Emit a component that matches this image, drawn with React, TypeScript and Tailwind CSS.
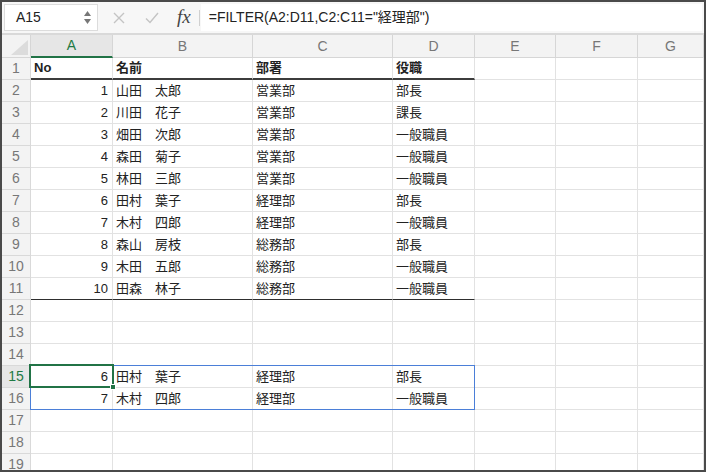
import React from "react";

const FONT = { fontFamily: '"Liberation Sans", "Noto Sans CJK JP", sans-serif' };

const COLS = ["A", "B", "C", "D", "E", "F", "G"];

type Row = [string, string, string, string];

const data: Record<number, Row> = {
  1: ["No", "名前", "部署", "役職"],
  2: ["1", "山田　太郎", "営業部", "部長"],
  3: ["2", "川田　花子", "営業部", "課長"],
  4: ["3", "畑田　次郎", "営業部", "一般職員"],
  5: ["4", "森田　菊子", "営業部", "一般職員"],
  6: ["5", "林田　三郎", "営業部", "一般職員"],
  7: ["6", "田村　葉子", "経理部", "部長"],
  8: ["7", "木村　四郎", "経理部", "一般職員"],
  9: ["8", "森山　房枝", "総務部", "部長"],
  10: ["9", "木田　五郎", "総務部", "一般職員"],
  11: ["10", "田森　林子", "総務部", "一般職員"],
  15: ["6", "田村　葉子", "経理部", "部長"],
  16: ["7", "木村　四郎", "経理部", "一般職員"],
};

const rows = Array.from({ length: 19 }, (_, i) => i + 1);

function Cell({ row, col }: { row: number; col: number }) {
  const r = data[row];
  const text = r && col < 4 ? r[col] : "";
  const bold = row === 1;
  let border = "border-b border-[#e2e2e2]";
  if (col < 4 && row === 1) border = "border-b-2 border-b-[#3c3c3c]";
  if (col < 4 && row === 11) border = "border-b border-b-[#2e2e2e]";
  const align = col === 0 && row !== 1 ? "justify-end pr-[4px]" : "justify-start pl-[3px]";
  return (
    <div
      className={`h-[22px] flex items-center border-r border-r-[#e2e2e2] ${border} ${align} text-[13px] text-[#222] whitespace-nowrap overflow-hidden ${bold ? "font-bold text-[#111]" : ""}`}
    >
      {text}
    </div>
  );
}

export default function App() {
  return (
    <div className="w-[706px] h-[472px] border-2 border-[#4a4a4a] bg-white overflow-hidden flex flex-col" style={FONT}>
      {/* formula bar */}
      <div className="h-[33px] flex items-center bg-[#f7f7f7] border-b-2 border-[#d9d9d9] shrink-0">
        <div className="ml-[2px] w-[94px] h-[27px] bg-white border border-[#dcdcdc] flex items-center justify-between pl-[11px] pr-[6px]">
          <span className="text-[14px] text-[#222]">A15</span>
          <div className="flex flex-col items-center gap-[3px]">
            <svg width="7" height="5" viewBox="0 0 7 5"><path d="M0 5 L3.5 0 L7 5 Z" fill="#777" /></svg>
            <svg width="7" height="5" viewBox="0 0 7 5"><path d="M0 0 L3.5 5 L7 0 Z" fill="#777" /></svg>
          </div>
        </div>
        <div className="flex items-center h-full pl-[15px] gap-[20px]">
          <svg width="12" height="12" viewBox="0 0 12 12"><path d="M1 1 L11 11 M11 1 L1 11" stroke="#c4c4c4" strokeWidth="1.4" /></svg>
          <svg width="14" height="12" viewBox="0 0 14 12"><path d="M1 6.5 L5 10.5 L13 1" stroke="#c4c4c4" strokeWidth="1.4" fill="none" /></svg>
          <span className="text-[19px] italic text-[#444] -ml-[2px]" style={{ fontFamily: '"Liberation Serif", serif' }}>
            fx
          </span>
        </div>
        <div className="ml-[8px] w-px h-[16px] bg-[#d0d0d0]" />
        <div className="flex-1 h-[27px] bg-white ml-[1px] mr-[2px] flex items-center pl-[8px] text-[14px] text-[#222]">
          =FILTER(A2:D11,C2:C11="経理部")
        </div>
      </div>

      {/* sheet */}
      <div className="relative flex-1">
        <div className="grid grid-cols-[29px_82px_140px_140px_82px_81px_82px_1fr]">
          {/* header row */}
          <div className="h-[23px] bg-[#f3f3f3] border-r border-b border-[#d6d6d6] relative overflow-hidden">
            <svg className="absolute right-[2px] bottom-[2px]" width="17" height="15" viewBox="0 0 17 15">
              <path d="M17 0 L17 15 L0 15 Z" fill="#dcdcdc" />
            </svg>
          </div>
          {COLS.map((c) => (
            <div
              key={c}
              className={`h-[23px] flex items-center justify-center text-[14px] border-r border-r-[#d6d6d6] ${
                c === "A" ? "bg-[#e6e6e6] text-[#1f7a43] border-b-2 border-b-[#217346]" : "bg-[#f3f3f3] text-[#777] border-b border-b-[#d6d6d6]"
              }`}
            >
              {c}
            </div>
          ))}

          {rows.map((r) => (
            <React.Fragment key={r}>
              <div
                className={`h-[22px] flex items-center justify-center text-[14px] border-r border-b border-[#d9d9d9] ${
                  r === 15 ? "bg-[#e6e6e6] text-[#1f7a43]" : "bg-[#f3f3f3] text-[#777]"
                }`}
              >
                {r}
              </div>
              {COLS.map((_, ci) => (
                <Cell key={ci} row={r} col={ci} />
              ))}
            </React.Fragment>
          ))}
        </div>

        {/* spill range outline A15:D16 */}
        <div className="absolute left-[28px] top-[330px] w-[445px] h-[45px] border border-[#4b7fd8] pointer-events-none" />
        {/* active cell A15 */}
        <div className="absolute left-[27px] top-[329px] w-[85px] h-[24px] border-2 border-[#217346] pointer-events-none" />
        <div className="absolute left-[108px] top-[349px] w-[6px] h-[6px] bg-[#217346] border border-white" />
      </div>
    </div>
  );
}
